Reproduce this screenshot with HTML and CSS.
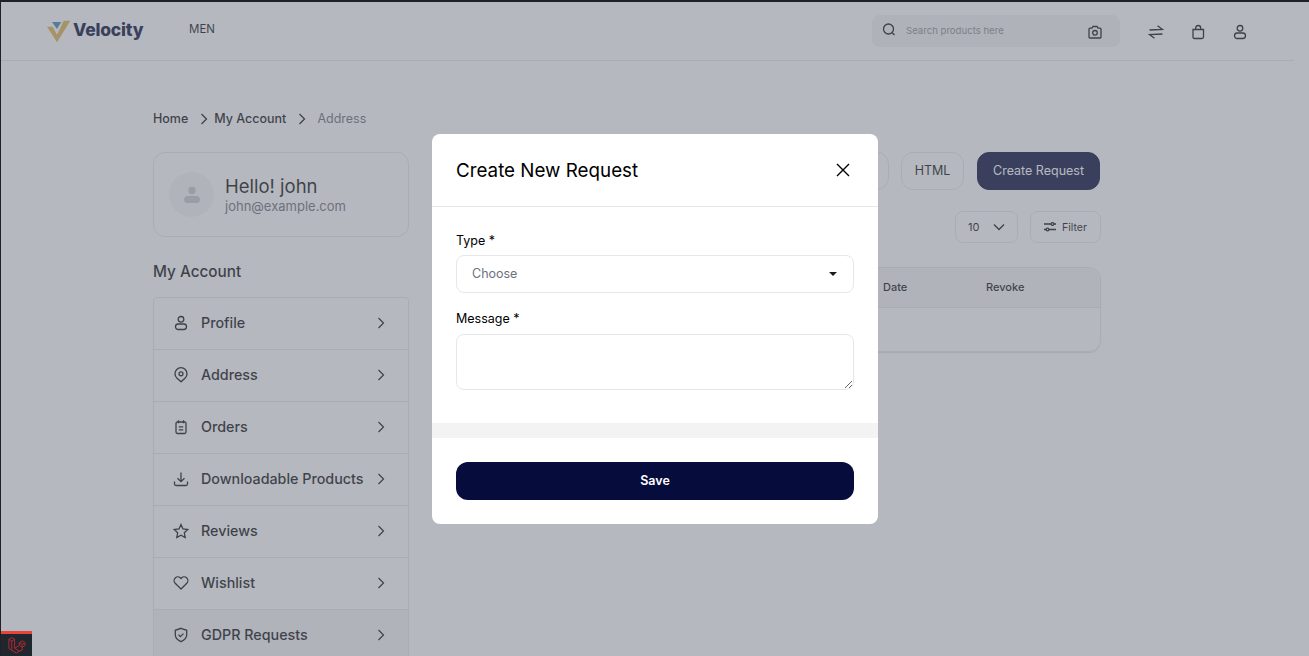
FILE: index.html
```html
<!DOCTYPE html>
<html lang="en">
<head>
<meta charset="utf-8">
<title>GDPR Requests</title>
<link rel="stylesheet" href="styles.css">
</head>
<body>
<div class="frame">
  <div class="page">
    <header class="topbar">
      <a class="logo">
        <svg class="logo-mark" viewBox="47 20 24 23" width="24" height="23"><path d="M47 26.700h5.700l4.300 8 6.700-14h6.600L57 42.300z" fill="#e0b44e"/><path d="M52 22h9.300L57 29z" fill="#3f86b8"/></svg>
        <span class="logo-text">Velocity</span>
      </a>
      <nav class="nav"><span>MEN</span></nav>
      <div class="top-actions">
        <div class="search">
          <svg class="ic" viewBox="0 0 16 16" width="16" height="16"><circle cx="7.500" cy="7" r="5" /><path d="M11.200 10.700l2.300 2.300"/></svg>
          <span class="search-text">Search products here</span>
          <svg class="ic cam" viewBox="0 0 16 16" width="16" height="16"><path d="M2 5.200q0-1 1-1h2l1-1.700h4l1 1.700h2q1 0 1 1v7.800q0 1-1 1H3q-1 0-1-1z"/><circle cx="8" cy="8.800" r="2.300"/></svg>
        </div>
        <svg class="ic top-ic" viewBox="0 0 16 16" width="16" height="16"><path d="M1.500 6L14.500 5.500 9.500 1.800M14.500 10L1.500 10.500 6.500 14.200"/></svg>
        <svg class="ic top-ic" viewBox="0 0 16 16" width="16" height="16"><path d="M3 5.500h10.500v7.500q0 1.500-1.500 1.500H4.500q-1.500 0-1.500-1.500zM5.700 5.500V4q0-2.500 2.500-2.500T10.700 4v1.500"/></svg>
        <svg class="ic top-ic" viewBox="0 0 16 16" width="16" height="16"><circle cx="8" cy="4.300" r="2.800"/><rect x="2.500" y="9" width="11" height="5.500" rx="2.750"/></svg>
      </div>
    </header>
    <main class="content">
      <div class="crumbs">
        <span>Home</span>
        <svg class="crumb-ic" viewBox="0 0 8 12" width="8" height="12"><path d="M1.500 1l5 5-5 5"/></svg>
        <span>My Account</span>
        <svg class="crumb-ic second" viewBox="0 0 8 12" width="8" height="12"><path d="M1.500 1l5 5-5 5"/></svg>
        <span class="crumb-now">Address</span>
      </div>
      <div class="columns">
        <aside class="sidebar">
          <div class="hello">
            <div class="avatar"><svg viewBox="0 0 18 18" width="18" height="18"><circle cx="9" cy="4.500" r="3.700"/><rect x="1" y="10" width="16" height="7" rx="3.500"/></svg></div>
            <div class="hello-text">
              <div class="hello-name">Hello! john</div>
              <div class="hello-mail">john@example.com</div>
            </div>
          </div>
          <h2 class="side-title">My Account</h2>
          <ul class="menu">
            <li class="menu-item"><svg class="ic" viewBox="0 0 16 16" width="16" height="16"><circle cx="8" cy="4.300" r="2.800"/><rect x="2.500" y="9" width="11" height="5.500" rx="2.750"/></svg><span class="menu-label">Profile</span><svg class="chev" viewBox="0 0 8 12" width="8" height="12"><path d="M1.500 1l5 5-5 5"/></svg></li>
            <li class="menu-item"><svg class="ic" viewBox="0 0 16 16" width="16" height="16"><path d="M8 14.800L3.800 11a6 6 0 1 1 8.400 0z"/><circle cx="8" cy="6.800" r="2"/></svg><span class="menu-label">Address</span><svg class="chev" viewBox="0 0 8 12" width="8" height="12"><path d="M1.500 1l5 5-5 5"/></svg></li>
            <li class="menu-item"><svg class="ic" viewBox="0 0 16 16" width="16" height="16"><rect x="3" y="3" width="10" height="11.500" rx="1.500"/><path d="M5.500 1.300v3M10.500 1.300v3M5.800 7.800h4.400M5.800 10.800h4.400"/></svg><span class="menu-label">Orders</span><svg class="chev" viewBox="0 0 8 12" width="8" height="12"><path d="M1.500 1l5 5-5 5"/></svg></li>
            <li class="menu-item"><svg class="ic" viewBox="0 0 16 16" width="16" height="16"><path d="M8 1.500v9M4.500 7.300L8 10.700l3.500-3.400M1.500 10.500v2.500q0 1.500 1.500 1.500h10q1.500 0 1.500-1.500v-2.500"/></svg><span class="menu-label">Downloadable Products</span><svg class="chev" viewBox="0 0 8 12" width="8" height="12"><path d="M1.500 1l5 5-5 5"/></svg></li>
            <li class="menu-item"><svg class="ic" viewBox="0 0 16 16" width="16" height="16"><path d="M8 1.500l2 4.400 4.800.6-3.500 3.300.9 4.700L8 12.200l-4.200 2.300.9-4.700L1.200 6.500 6 5.900z"/></svg><span class="menu-label">Reviews</span><svg class="chev" viewBox="0 0 8 12" width="8" height="12"><path d="M1.500 1l5 5-5 5"/></svg></li>
            <li class="menu-item"><svg class="ic" viewBox="0 0 16 16" width="16" height="16"><path d="M8 14L2.200 8.200a3.700 3.700 0 0 1 5.300-5.200l.5.600.5-.6a3.700 3.700 0 0 1 5.300 5.200z"/></svg><span class="menu-label">Wishlist</span><svg class="chev" viewBox="0 0 8 12" width="8" height="12"><path d="M1.500 1l5 5-5 5"/></svg></li>
            <li class="menu-item active"><svg class="ic" viewBox="0 0 16 16" width="16" height="16"><path d="M8 1.300l5.700 2v4.500q0 4.400-5.700 6.900-5.700-2.500-5.700-6.900V3.300z"/><path d="M5.500 7.800l1.800 1.800 3.200-3"/></svg><span class="menu-label">GDPR Requests</span><svg class="chev" viewBox="0 0 8 12" width="8" height="12"><path d="M1.500 1l5 5-5 5"/></svg></li>
          </ul>
        </aside>
        <section class="main">
          <div class="btn-row">
            <button class="btn btn-pdf" aria-label="PDF"></button>
            <button class="btn btn-html">HTML</button>
            <button class="btn btn-create">Create Request</button>
          </div>
          <div class="tools">
            <div class="tool tool-per">10<svg class="tool-chev" viewBox="0 0 12 8" width="12" height="8"><path d="M1 1.500l5 5 5-5"/></svg></div>
            <div class="tool tool-filter"><svg class="ic" viewBox="0 0 14 12" width="14" height="12"><path d="M1 3h7M11 3h2M1 8.500h2M6 8.500h7"/><circle cx="9.500" cy="3" r="1.400"/><circle cx="4.500" cy="8.500" r="1.400"/></svg>Filter</div>
          </div>
          <div class="table">
            <div class="table-head"><span></span><span>Date</span><span>Revoke</span></div>
            <div class="table-row"></div>
          </div>
        </section>
      </div>
    </main>
  </div>
  <div class="overlay">
    <div class="modal">
      <div class="modal-head">
        <h3 class="modal-title">Create New Request</h3>
        <svg class="modal-close" viewBox="0 0 14 14" width="14" height="14"><path d="M1 1l12 12M13 1L1 13"/></svg>
      </div>
      <form class="modal-body">
        <label class="field-label" for="type">Type *</label>
        <div class="select-wrap">
          <select class="field-select" id="type"><option>Choose</option></select>
        </div>
        <label class="field-label msg" for="msg">Message *</label>
        <textarea class="field-area" id="msg"></textarea>
      </form>
      <div class="modal-strip"></div>
      <div class="modal-foot"><button class="save" type="button">Save</button></div>
    </div>
  </div>
  <div class="devbar">
    <svg viewBox="0 0 20 20" width="19" height="19"><path d="M2 3.500l3-1.800 3 1.800v9.500l5 3-3 2-8-4.800zM2 3.500l3 1.800 3-1.800M5 5.300v9M8 13l5-3V7l3-1.800 3 1.800v3l-3 1.800v3.200L13 16M13 7l3 1.800 3-1.800M16 8.800v3M13 10l3 1.800"/></svg>
  </div>
</div>
</body>
</html>
```

FILE: styles.css
```css
* { box-sizing: border-box; }
html, body { margin: 0; height: 100%; overflow: hidden; }
body { font-family: Inter, "Liberation Sans", sans-serif; color: #111; background: #fff; }
.frame { position: relative; height: 656px; border-top: 2px solid #1f2126; border-left: 1px solid #1f2126; overflow: hidden; }
.page { width: 1293px; background: #fff; }
.ic { fill: none; stroke: #111; stroke-width: 1.300; flex: none; }
ul { margin: 0; padding: 0; list-style: none; }

.topbar { height: 59px; display: flex; align-items: flex-start; border-bottom: 1px solid #e5e7eb; }
.logo { display: flex; align-items: center; margin: 18px 0 0 46px; width: 142px; height: 23px; }
.logo-text { font-weight: 800; font-size: 17.500px; color: #060c3b; margin: -4px 0 0 2px; letter-spacing: -.2px; line-height: 23px; }
.nav { font-size: 11.500px; line-height: 18px; margin-top: 18px; color: #111; }
.top-actions { margin-left: auto; margin-top: 13px; margin-right: 46px; display: flex; align-items: center; }
.search { width: 248px; height: 32px; border-radius: 8px; background: #f2f2f2; display: flex; align-items: center; padding: 0 17px 0 9px; margin-right: 28px; }
.search .ic { margin-top: -2px; }
.search-text { font-size: 9.600px; line-height: 12px; color: #8e8e95; margin: 0 0 0 9px; flex: 1; }
.search .cam { margin-top: 2px; }
.top-ic { margin: 2px 0 0 0; }
.top-ic + .top-ic { margin-left: 26px; }

.content { padding: 47px 0 0 152px; }
.crumbs { display: flex; align-items: center; height: 20px; font-size: 12.500px; font-weight: 500; color: #111; margin-bottom: 24px; }
.crumb-ic { fill: none; stroke: #111; stroke-width: 1.300; margin: 1px 6px 0 12px; }
.crumb-ic.second { margin: 1px 11px 0 12px; }
.crumb-now { color: #6e6e78; font-weight: 400; }
.columns { display: flex; gap: 32px; }
.sidebar { width: 256px; flex: none; }
.hello { height: 85px; border: 1px solid #e5e7eb; border-radius: 12px; display: flex; align-items: center; padding: 0 15px; gap: 11px; }
.avatar { width: 45px; height: 45px; border-radius: 50%; background: #f5f5f5; display: flex; align-items: center; justify-content: center; flex: none; }
.avatar svg { fill: #c6c8cc; }
.hello-text { margin-top: -2px; }
.hello-name { font-size: 18.500px; line-height: 24px; color: #111; }
.hello-mail { font-size: 13px; line-height: 16px; color: #6e6e78; }
.side-title { font-size: 15.300px; font-weight: 500; line-height: 24px; margin: 23px 0 13px; color: #111; }
.menu { border: 1px solid #e5e7eb; border-bottom: 0; border-radius: 4px 4px 0 0; }
.menu-item { height: 52px; display: flex; align-items: center; padding: 0 20px 2px 19px; border-bottom: 1px solid #e5e7eb; font-size: 14.300px; font-weight: 500; color: #111; }
.menu-label { margin-left: 12px; flex: 1; }
.chev { fill: none; stroke: #111; stroke-width: 1.200; flex: none; margin-right: 3px; }
.menu-item.active { background: #f5f5f5; }

.main { width: 660px; flex: none; }
.btn-row { display: flex; justify-content: flex-end; height: 38px; }
.btn { font: inherit; font-size: 12.500px; border-radius: 12px; border: 1px solid #e5e7eb; background: #fff; color: #111; padding: 0 0 2px; }
.btn-pdf { width: 60px; margin-right: 12px; }
.btn-html { width: 63px; margin-right: 13px; }
.btn-create { width: 123px; margin-right: 1px; background: #060c3b; border-color: #060c3b; color: #fff; }
.tools { display: flex; justify-content: flex-end; gap: 12px; margin-top: 21px; }
.tool { height: 32px; border: 1px solid #e5e7eb; border-radius: 8px; display: flex; align-items: center; font-size: 11px; color: #111; }
.tool-per { width: 63px; padding: 0 12px; justify-content: space-between; }
.tool-chev { fill: none; stroke: #111; stroke-width: 1.300; }
.tool-filter { width: 71px; padding-left: 12px; gap: 5px; font-size: 10.500px; }
.table { margin-top: 24px; border: 1px solid #e5e7eb; border-radius: 12px; overflow: hidden; box-shadow: 0 1px 1px rgba(0,0,0,.12); }
.table-head { height: 40px; padding-bottom: 2px; background: #f5f5f5; display: grid; grid-template-columns: 441px 103px 1fr; align-items: center; font-size: 11px; font-weight: 500; color: #111; border-bottom: 1px solid #e5e7eb; }
.table-row { height: 43px; }

.overlay { position: absolute; inset: 0; background: rgba(107,114,128,.5); display: flex; justify-content: center; padding-top: 132px; }
.modal { width: 446px; height: 390px; background: #fff; border-radius: 8px; overflow: hidden; }
.modal-head { height: 73px; padding: 0 28px 0 24px; display: flex; align-items: center; justify-content: space-between; border-bottom: 1px solid #e5e7eb; }
.modal-title { margin: 0; font-size: 18.800px; font-weight: 400; color: #000; }
.modal-close { fill: none; stroke: #000; stroke-width: 1.400; }
.modal-body { padding: 24px 24px 33px; height: 216px; }
.field-label { display: block; font-size: 12.500px; line-height: 20px; color: #000; margin-bottom: 5px; }
.field-label.msg { margin-top: 16px; margin-bottom: 5px; }
.select-wrap { position: relative; height: 38px; margin-top: -1px; }
.select-wrap::after { content: ""; position: absolute; right: 17px; top: 17px; border: 4px solid transparent; border-top-color: #1a1a1a; border-bottom: 0; }
.field-select { width: 100%; height: 38px; appearance: none; font: inherit; font-size: 12.500px; color: #6b7280; background: #fff; border: 1px solid #e5e7eb; border-radius: 8px; padding: 0 15px 2px; }
.field-area { display: block; width: 100%; height: 56px; border: 1px solid #e5e7eb; border-radius: 8px; background: #fff; font: inherit; }
.modal-strip { height: 15px; background: #f3f3f3; }
.modal-foot { padding: 24px; }
.save { display: block; width: 100%; height: 38px; border: 0; border-radius: 12px; background: #060c3b; color: #fff; font: inherit; font-size: 12.500px; font-weight: 600; padding: 0 0 2px; }

.devbar { position: absolute; left: 0; bottom: 0; width: 31px; height: 25px; background: #20262e; border-top: 3px solid #e8453a; display: flex; align-items: center; justify-content: center; }
.devbar svg { fill: none; stroke: #b3282d; stroke-width: 1; }
```
